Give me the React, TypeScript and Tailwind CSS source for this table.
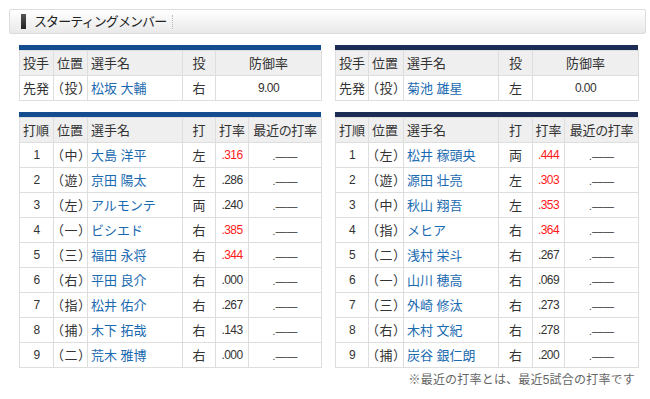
type Batter = {
  order: number
  pos: string
  name: string
  bats: string
  avg: string
  hot?: boolean
}

type Pitcher = {
  name: string
  throws: string
  era: string
}

type TeamProps = {
  barColor: string
  widths: number[]
  pitcher: Pitcher
  lineup: Batter[]
}

const dragons: Batter[] = [
  { order: 1, pos: '（中）', name: '大島 洋平', bats: '左', avg: '.316', hot: true },
  { order: 2, pos: '（遊）', name: '京田 陽太', bats: '左', avg: '.286' },
  { order: 3, pos: '（左）', name: 'アルモンテ', bats: '両', avg: '.240' },
  { order: 4, pos: '（一）', name: 'ビシエド', bats: '右', avg: '.385', hot: true },
  { order: 5, pos: '（三）', name: '福田 永将', bats: '右', avg: '.344', hot: true },
  { order: 6, pos: '（右）', name: '平田 良介', bats: '右', avg: '.000' },
  { order: 7, pos: '（指）', name: '松井 佑介', bats: '右', avg: '.267' },
  { order: 8, pos: '（捕）', name: '木下 拓哉', bats: '右', avg: '.143' },
  { order: 9, pos: '（二）', name: '荒木 雅博', bats: '右', avg: '.000' },
]

const lions: Batter[] = [
  { order: 1, pos: '（左）', name: '松井 稼頭央', bats: '両', avg: '.444', hot: true },
  { order: 2, pos: '（遊）', name: '源田 壮亮', bats: '左', avg: '.303', hot: true },
  { order: 3, pos: '（中）', name: '秋山 翔吾', bats: '左', avg: '.353', hot: true },
  { order: 4, pos: '（指）', name: 'メヒア', bats: '右', avg: '.364', hot: true },
  { order: 5, pos: '（二）', name: '浅村 栄斗', bats: '右', avg: '.267' },
  { order: 6, pos: '（一）', name: '山川 穂高', bats: '右', avg: '.069' },
  { order: 7, pos: '（三）', name: '外崎 修汰', bats: '右', avg: '.273' },
  { order: 8, pos: '（右）', name: '木村 文紀', bats: '右', avg: '.278' },
  { order: 9, pos: '（捕）', name: '炭谷 銀仁朗', bats: '右', avg: '.200' },
]

// header / body cell styles shared by both tables
const th = 'h-[25px] whitespace-nowrap border border-[#dedede] bg-[#efefef] px-[3px] font-normal'
const td = 'h-[25px] whitespace-nowrap border border-[#dedede] bg-white px-[3px]'
const num = 'text-[12px] tracking-[-0.6px]'
const pos = '!pl-[3px] !pr-0 tracking-[1px] [font-feature-settings:"palt"]'

function PitcherTable({ barColor, widths, pitcher }: Omit<TeamProps, 'lineup'>) {
  return (
    <div>
      <div className={`h-[5px] ${barColor}`} />
      <table className="w-full table-fixed border-collapse">
        <colgroup>
          {widths.map((w, i) => (
            <col key={i} style={{ width: w }} />
          ))}
        </colgroup>
        <thead>
          <tr>
            <th className={`${th} text-left`}>投手</th>
            <th className={`${th} text-left`}>位置</th>
            <th className={`${th} text-left`}>選手名</th>
            <th className={`${th} text-center`}>投</th>
            <th className={`${th} text-center`}>防御率</th>
          </tr>
        </thead>
        <tbody>
          <tr>
            <td className={td}>先発</td>
            <td className={`${td} ${pos}`}>（投）</td>
            <td className={`${td} text-[#1a6ab0]`}>{pitcher.name}</td>
            <td className={`${td} text-center`}>{pitcher.throws}</td>
            <td className={`${td} text-center ${num}`}>{pitcher.era}</td>
          </tr>
        </tbody>
      </table>
    </div>
  )
}

function LineupTable({ barColor, widths, lineup }: { barColor: string; widths: number[]; lineup: Batter[] }) {
  return (
    <div>
      <div className={`h-[5px] ${barColor}`} />
      <table className="w-full table-fixed border-collapse">
        <colgroup>
          {widths.map((w, i) => (
            <col key={i} style={{ width: w }} />
          ))}
        </colgroup>
        <thead>
          <tr>
            <th className={`${th} text-left`}>打順</th>
            <th className={`${th} text-left`}>位置</th>
            <th className={`${th} text-left`}>選手名</th>
            <th className={`${th} text-center`}>打</th>
            <th className={`${th} !px-0 text-center`}>打率</th>
            <th className={`${th} !px-0 text-center tracking-[-0.3px]`}>最近の打率</th>
          </tr>
        </thead>
        <tbody>
          {lineup.map((b) => (
            <tr key={b.order}>
              <td className={`${td} text-center ${num}`}>{b.order}</td>
              <td className={`${td} ${pos}`}>{b.pos}</td>
              <td className={`${td} text-[#1a6ab0]`}>{b.name}</td>
              <td className={`${td} text-center`}>{b.bats}</td>
              <td className={`${td} text-center ${num} ${b.hot ? 'text-[#ff1a1a]' : ''}`}>{b.avg}</td>
              <td className={`${td} text-center`}>
                <span className="text-[10px]">.</span>
                <span className="text-[11px]">――</span>
              </td>
            </tr>
          ))}
        </tbody>
      </table>
    </div>
  )
}

export default function App() {
  return (
    <div
      className="h-[399px] w-[650px] bg-white pl-[9px] pr-[4px] pt-[9px] text-[13px] leading-none text-[#333]"
      style={{ fontFamily: '"Liberation Sans", "Noto Sans CJK JP", sans-serif' }}
    >
      <div className="flex h-[25px] items-center rounded-[2px] border border-[#dcdcdc] bg-gradient-to-b from-white to-[#e9e9e9] pl-[11px]">
        <span className="h-[15px] w-[5px] bg-gradient-to-b from-[#555] to-[#222]" />
        <span className="ml-[8px] text-[13px] tracking-[-0.9px] text-[#222]">スターティングメンバー</span>
        <span className="ml-[6px] h-[14px] border-l border-dotted border-[#bbb]" />
      </div>

      <div className="mt-[11px] grid grid-cols-[302px_303px] gap-x-[14px] pl-[10px]">
        <PitcherTable
          barColor="bg-[#134d8f]"
          widths={[34, 34, 95, 33, 106]}
          pitcher={{ name: '松坂 大輔', throws: '右', era: '9.00' }}
        />
        <PitcherTable
          barColor="bg-[#1d2c55]"
          widths={[33, 35, 95, 34, 106]}
          pitcher={{ name: '菊池 雄星', throws: '左', era: '0.00' }}
        />
      </div>

      <div className="mt-[11px] grid grid-cols-[302px_303px] gap-x-[14px] pl-[10px]">
        <LineupTable barColor="bg-[#134d8f]" widths={[34, 34, 95, 33, 33, 73]} lineup={dragons} />
        <LineupTable barColor="bg-[#1d2c55]" widths={[33, 35, 95, 34, 32, 74]} lineup={lions} />
      </div>

      <p className="mt-[6px] pr-[11px] text-right text-[12px] tracking-[0.2px] text-[#666]">
        ※最近の打率とは、最近5試合の打率です
      </p>
    </div>
  )
}
